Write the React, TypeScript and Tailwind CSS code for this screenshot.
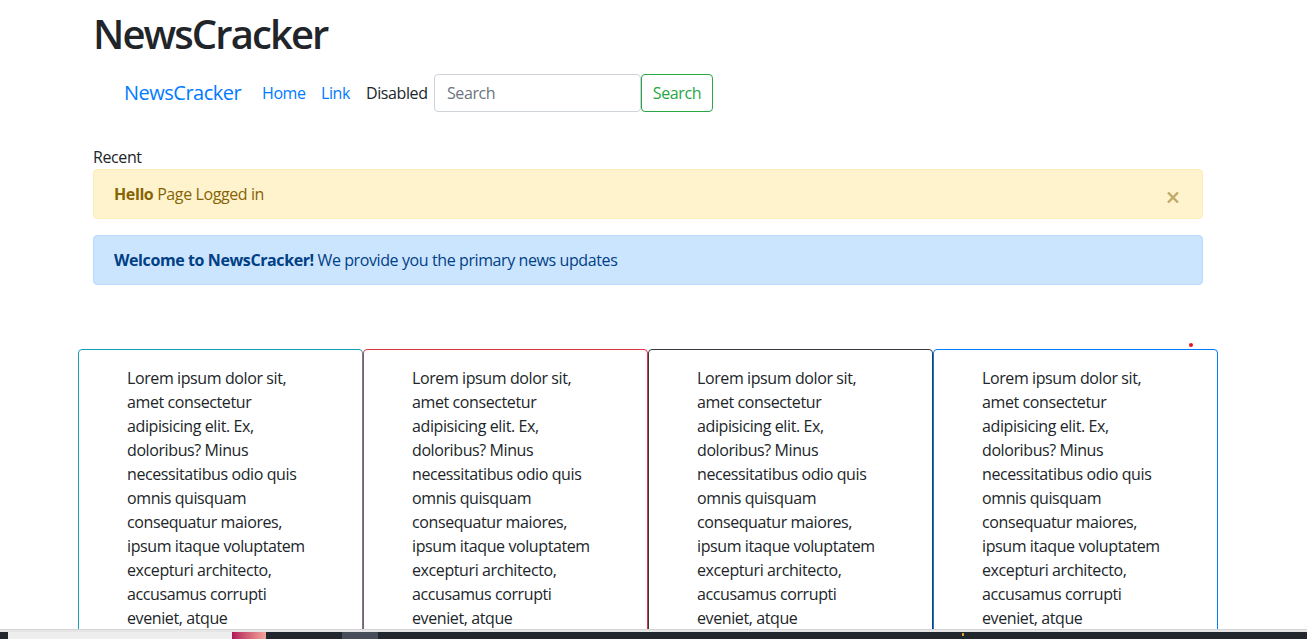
import React from "react";

const lorem =
  "Lorem ipsum dolor sit, amet consectetur adipisicing elit. Ex, doloribus? Minus necessitatibus odio quis omnis quisquam consequatur maiores, ipsum itaque voluptatem excepturi architecto, accusamus corrupti eveniet, atque necessitatibus voluptate aliquid nulla ipsa rerum.";

const cardBorders = ["border-[#17a2b8]", "border-[#dc3545]", "border-[#343a40]", "border-[#007bff]"];

export default function App() {
  return (
    <div className="h-[639px] w-full overflow-hidden flex flex-col bg-white text-[#212529] font-['Open_Sans',sans-serif] text-[16px] leading-[24px] tracking-[-0.4px]">
      <div className="flex-1 min-h-0 overflow-hidden">
        <div className="ml-[93px] w-[1110px]">
          <h1 className="pt-[10px] text-[40px] leading-[48px] font-semibold tracking-[-1.9px]">NewsCracker</h1>
          <nav className="mt-[16px] h-[38px] flex items-center">
            <div className="w-[31px] shrink-0" />
            <a className="w-[114px] shrink-0 mr-[16px] text-[20px] leading-[30px] text-[#007bff] whitespace-nowrap tracking-[-0.5px]">NewsCracker</a>
            <a className="w-[59px] shrink-0 px-2 text-[#007bff] whitespace-nowrap">Home</a>
            <a className="w-[45px] shrink-0 px-2 text-[#007bff] whitespace-nowrap">Link</a>
            <span className="w-[76px] shrink-0 px-2 text-[#212529] whitespace-nowrap">Disabled</span>
            <div className="w-[207px] shrink-0 h-[38px] border border-[#ced4da] rounded-[4px] px-[12px] flex items-center text-[#6c757d]">
              Search
            </div>
            <button className="w-[72px] shrink-0 h-[38px] border border-[#28a745] rounded-[4px] text-[#28a745] flex items-center justify-center">
              Search
            </button>
          </nav>
          <div className="mt-[33px]">Recent</div>
          <div className="relative h-[50px] border border-[#ffeeba] bg-[#fff3cd] rounded-[4px] px-[20px] py-[12px] text-[#856404]">
            <strong className="font-bold">Hello</strong> Page Logged in
            <svg
              className="absolute right-[23px] top-[22px] opacity-50"
              width="12"
              height="11"
              viewBox="0 0 12 11"
              aria-label="Close"
            >
              <path d="M1 0.5 L11 10.5 M11 0.5 L1 10.5" stroke="#856404" strokeWidth="2.4" fill="none" />
            </svg>
          </div>
          <div className="mt-[16px] h-[50px] border border-[#b8daff] bg-[#cce5ff] rounded-[4px] px-[20px] py-[12px] text-[#004085]">
            <strong className="font-bold">Welcome to NewsCracker!</strong> We provide you the primary news updates
          </div>
        </div>
        <div className="relative ml-[78px] w-[1140px] mt-[64px]">
          <span className="absolute left-[1111px] top-[-6px] w-[4px] h-[4px] rounded-full bg-[#e8141c]" />
          <div className="grid grid-cols-[285px_285px_285px_285px]">
            {cardBorders.map((b, i) => (
              <div key={i} className={`border ${b} rounded-[4px] px-12 py-4`}>
                <p>{lorem}</p>
              </div>
            ))}
          </div>
        </div>
      </div>
      <div className="h-[10px] shrink-0 flex flex-col">
        <div className="h-[3px] bg-[#e6e6e6] border-t border-[#d4d4d4]" />
        <div className="flex-1 bg-[#22262d] flex items-stretch relative">
          <div className="ml-[8px] w-[224px] bg-[#eeeeee]" />
          <div className="w-[34px] bg-gradient-to-r from-[#b0125a] to-[#f3a39a]" />
          <div className="ml-[76px] w-[36px] bg-[#474e59]" />
          <span className="absolute left-[962px] top-[1px] w-[2px] h-[3px] bg-[#e0a030]" />
        </div>
      </div>
    </div>
  );
}
